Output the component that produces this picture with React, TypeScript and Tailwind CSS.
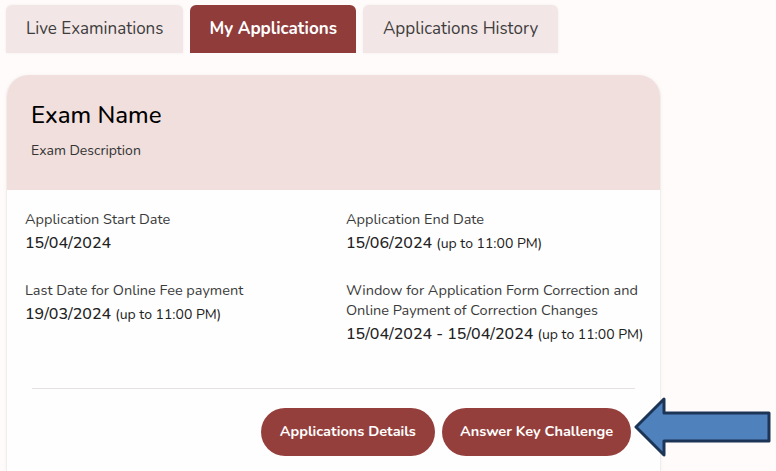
import React, { useState } from 'react';

const tabs = ['Live Examinations', 'My Applications', 'Applications History'];

function Arrow() {
  return (
    <svg width="140" height="64" viewBox="0 0 140 64" className="shrink-0">
      <path
        d="M3 31 L31 3 L31 17 L136 17 L136 45 L31 45 L31 59 Z"
        fill="#4f81bd"
        stroke="#1c3557"
        strokeWidth="3"
        strokeLinejoin="round"
      />
    </svg>
  );
}

export default function App() {
  const [active, setActive] = useState(1);

  return (
    <div
      className="w-[776px] h-[471px] overflow-hidden bg-[#fffbfa] pl-[6px] pt-[5px]"
      style={{ fontFamily: 'Nunito, Lato, "Noto Sans", sans-serif' }}
    >
      {/* Tabs */}
      <div className="flex gap-[7px]">
        {tabs.map((t, i) => (
          <button
            key={t}
            onClick={() => setActive(i)}
            className={
              i === active
                ? 'h-[48px] px-[19px] rounded-t-[6px] bg-[#8f3c3b] text-white text-[17px] font-bold'
                : 'h-[48px] px-[20px] rounded-t-[6px] bg-[#f3e6e6] text-[#3d3d3d] text-[17px] shadow-[0_0_3px_rgba(0,0,0,0.06)]'
            }
          >
            {t}
          </button>
        ))}
      </div>

      <div className="flex items-start mt-[22px]">
        {/* Card */}
        <div className="w-[655px] h-[420px] rounded-t-[22px] bg-[#fefefe] border-l border-r border-[#f2ecea] shadow-[0_0_4px_rgba(0,0,0,0.04)] overflow-hidden shrink-0">
          <div className="h-[115px] bg-[#f0dfdd] px-[24px] pt-[24px]">
            <h1 className="text-[24px] font-medium text-black leading-[32px]">Exam Name</h1>
            <p className="mt-[9px] text-[14px] text-[#333]">Exam Description</p>
          </div>

          <div className="px-[18px] pt-[19px]">
            <div className="grid grid-cols-[321px_1fr] gap-y-[22px] text-[#3a3a3a]">
              <div>
                <div className="text-[14.5px] leading-[20px]">Application Start Date</div>
                <div className="text-[16px] font-medium leading-[28px] text-[#222]">15/04/2024</div>
              </div>
              <div>
                <div className="text-[14.5px] leading-[20px]">Application End Date</div>
                <div className="text-[16px] font-medium leading-[28px] text-[#222] whitespace-nowrap">
                  15/06/2024 <span className="text-[14px] font-normal">(up to 11:00 PM)</span>
                </div>
              </div>
              <div>
                <div className="text-[14.5px] leading-[20px]">Last Date for Online Fee payment</div>
                <div className="text-[16px] font-medium leading-[28px] text-[#222] whitespace-nowrap">
                  19/03/2024 <span className="text-[14px] font-normal">(up to 11:00 PM)</span>
                </div>
              </div>
              <div>
                <div className="text-[14.5px] leading-[20px] whitespace-nowrap">
                  Window for Application Form Correction and
                  <br />
                  Online Payment of Correction Changes
                </div>
                <div className="text-[16px] font-medium leading-[28px] text-[#222] whitespace-nowrap">
                  15/04/2024 - 15/04/2024 <span className="text-[14px] font-normal">(up to 11:00 PM)</span>
                </div>
              </div>
            </div>

            <div className="mt-[39px] mx-[7px] border-t border-[#e6e2e1]" />

            <div className="flex justify-end gap-[7px] mt-[19px] pr-[11px]">
              <button className="h-[48px] px-[19px] rounded-full bg-[#953f3d] text-white text-[14.5px] font-bold">
                Applications Details
              </button>
              <button className="h-[48px] px-[18px] rounded-full bg-[#953f3d] text-white text-[14.5px] font-bold">
                Answer Key Challenge
              </button>
            </div>
          </div>
        </div>

        <div className="mt-[321px] -ml-[28px]">
          <Arrow />
        </div>
      </div>
    </div>
  );
}
